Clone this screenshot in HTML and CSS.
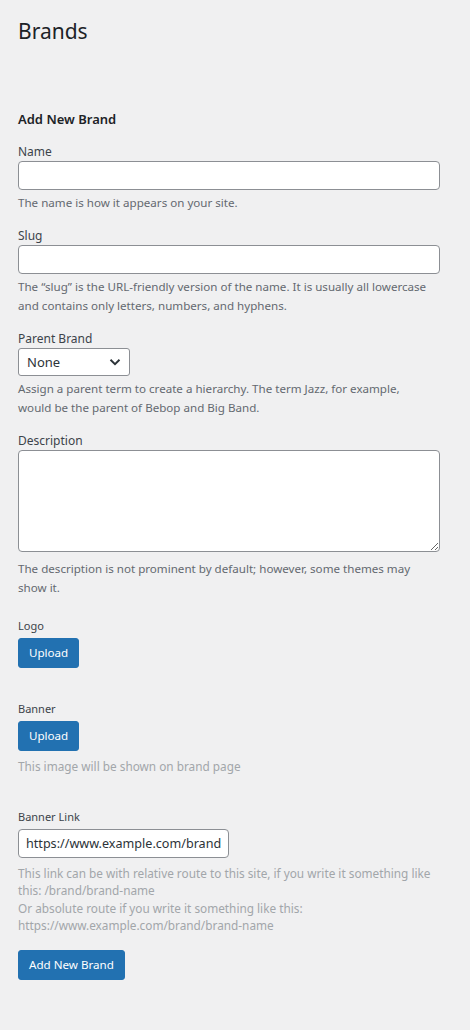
FILE: index.html
```html
<!DOCTYPE html>
<html lang="en">
<head>
    <meta charset="UTF-8">
    <meta name="viewport" content="width=device-width, initial-scale=1.0">
    <link rel="stylesheet" href="styles.css">
</head>
<body>
    <div class="wrap">
        <h1 class="page-title">Brands</h1>

        <form id="addBrand" class="form-wrap">
            <h2 class="form-title">Add New Brand</h2>

            <div class="form-field">
                <label for="brandName">Name</label>
                <input type="text" id="brandName" class="text-input">
                <p class="description">The name is how it appears on your site.</p>
            </div>

            <div class="form-field">
                <label for="brandSlug">Slug</label>
                <input type="text" id="brandSlug" class="text-input">
                <p class="description">The “slug” is the URL-friendly version of the name. It is usually all lowercase and contains only letters, numbers, and hyphens.</p>
            </div>

            <div class="form-field">
                <label for="parentBrand">Parent Brand</label>
                <div class="select-box">
                    <select id="parentBrand">
                        <option value="-1" selected>None</option>
                    </select>
                    <svg class="select-arrow" width="12" height="12" viewBox="0 0 12 12" aria-hidden="true">
                        <path d="M1.5 3.8 6 8.2 10.5 3.8" fill="none" stroke="#2c3338" stroke-width="1.9"/>
                    </svg>
                </div>
                <p class="description">Assign a parent term to create a hierarchy. The term Jazz, for example, would be the parent of Bebop and Big Band.</p>
            </div>

            <div class="form-field">
                <label for="brandDesc">Description</label>
                <textarea id="brandDesc" rows="5"></textarea>
                <p class="description">The description is not prominent by default; however, some themes may show it.</p>
            </div>

            <!-- custom brand fields -->
            <div class="extra-field">
                <label>Logo</label>
                <button type="button" class="button-primary">Upload</button>
            </div>

            <div class="extra-field">
                <label>Banner</label>
                <button type="button" class="button-primary">Upload</button>
                <p class="hint">This image will be shown on brand page</p>
            </div>

            <div class="extra-field">
                <label for="bannerLink">Banner Link</label>
                <input type="text" id="bannerLink" class="link-input" value="https://www.example.com/brand">
                <p class="hint">This link can be with relative route to this site, if you write it something like this: /brand/brand-name<br>Or absolute route if you write it something like this: https://www.example.com/brand/brand-name</p>
            </div>

            <p class="submit">
                <button type="submit" class="button-primary">Add New Brand</button>
            </p>
        </form>
    </div>
</body>
</html>
```

FILE: styles.css
```css
:root {
    --bg: #f0f0f1;
    --text: #3c434a;
    --heading: #1d2327;
    --muted: #646970;
    --faint: #a2a6aa;
    --border: #8c8f94;
    --primary: #2271b1;
}

body {
    font-family: "Noto Sans", "Open Sans", sans-serif;
    font-size: 12px;
    color: var(--text);
    background-color: var(--bg);
    margin: 0;
}

.wrap {
    padding: 0 30px 0 18px;
}

.page-title {
    font-size: 21px;
    font-weight: 400;
    line-height: 30px;
    color: var(--heading);
    margin: 0;
    padding: 16px 0 0;
}

.form-wrap {
    margin-top: 64px;
}

.form-title {
    font-size: 13px;
    font-weight: 600;
    line-height: 18px;
    color: var(--heading);
    margin: 0 0 12px;
}

.form-field {
    margin-bottom: 12px;
}

.form-field label {
    display: block;
    line-height: 18px;
    padding: 3px 0 0;
}

.text-input,
textarea,
.link-input {
    box-sizing: border-box;
    font-family: inherit;
    font-size: 12.6px;
    color: #2c3338;
    background: #fff;
    border: 1px solid var(--border);
    border-radius: 4px;
    margin: 0;
}

.text-input {
    display: block;
    width: 100%;
    height: 29px;
    padding: 0 8px;
}

textarea {
    display: block;
    width: 100%;
    height: 102px;
    padding: 2px 6px;
    resize: both;
}

textarea + .description {
    margin-top: 7px;
}

.select-box {
    position: relative;
    width: 112px;
}

.select-box select {
    display: block;
    box-sizing: border-box;
    width: 112px;
    height: 28px;
    padding: 0 24px 0 8px;
    font-family: inherit;
    font-size: 13px;
    color: #2c3338;
    background: #fff;
    border: 1px solid var(--border);
    border-radius: 3px;
    appearance: none;
    -webkit-appearance: none;
}

.select-arrow {
    position: absolute;
    right: 9px;
    top: 8px;
    pointer-events: none;
}

.description {
    max-width: 412px;
    font-size: 11.6px;
    color: var(--muted);
    line-height: 19px;
    margin: 3px 0 5px;
}

.extra-field {
    margin-top: 33px;
}

.form-field + .extra-field {
    margin-top: 21px;
}

.extra-field label {
    display: block;
    font-size: 11px;
    line-height: 16px;
    margin-bottom: 4px;
}

.button-primary {
    display: inline-block;
    height: 30px;
    padding: 0 10px;
    font-family: inherit;
    font-size: 11.6px;
    line-height: 28px;
    color: #fff;
    background: var(--primary);
    border: 1px solid var(--primary);
    border-radius: 3px;
    cursor: pointer;
}

.hint {
    font-size: 11.8px;
    line-height: 17.6px;
    color: var(--faint);
    margin: 7px 0 0;
}

.link-input {
    display: block;
    width: 211px;
    height: 29px;
    padding: 0 7px;
}

.submit {
    margin: 15px 0 0;
    padding-bottom: 50px;
}
```
